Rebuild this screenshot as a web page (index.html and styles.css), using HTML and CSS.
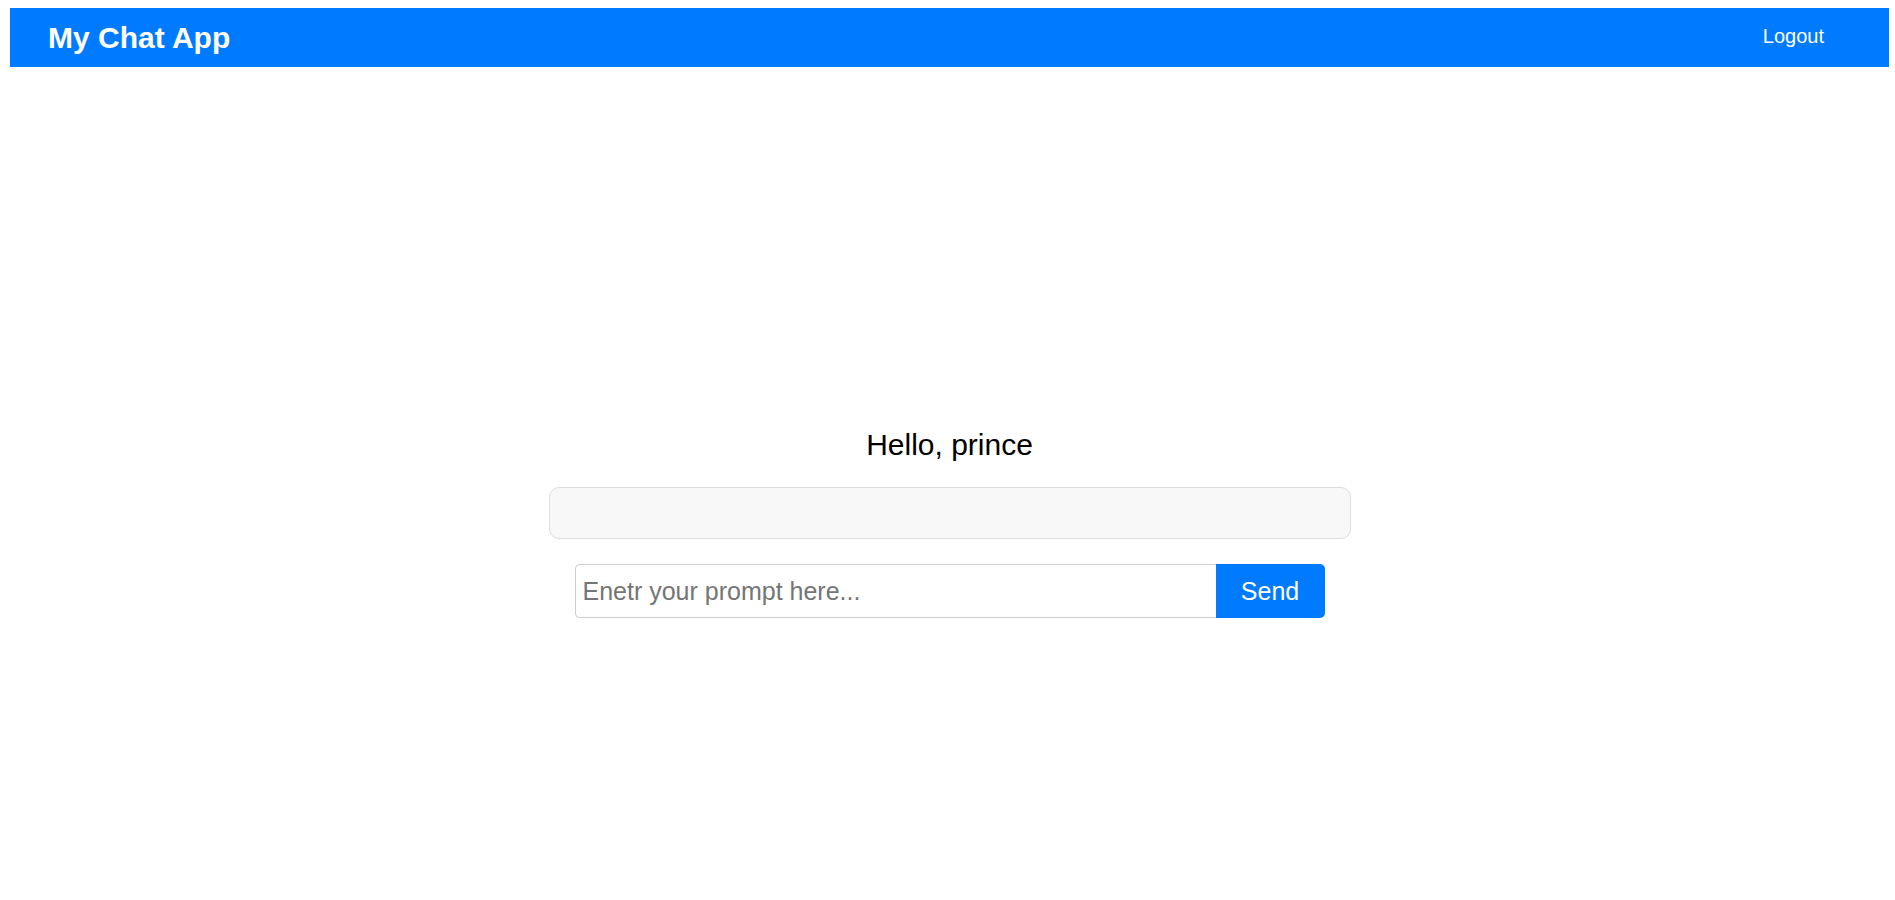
FILE: index.html
```html
<!DOCTYPE html>
<html lang="en">
<head>
<meta charset="utf-8">
<title>My Chat App</title>
<link rel="stylesheet" href="styles.css">
</head>
<body>
<header class="navbar">
  <div class="brand">My Chat App</div>
  <button class="logout" type="button">Logout</button>
</header>
<main class="chat">
  <h2 class="greeting">Hello, prince</h2>
  <div class="output"></div>
  <form class="prompt-row">
    <input class="prompt" type="text" placeholder="Enetr your prompt here...">
    <button class="send" type="button">Send</button>
  </form>
</main>
</body>
</html>
```
FILE: styles.css
```css
html, body {
  background: #ffffff;
}
body {
  margin: 8px 6px 8px 10px;
  font-family: "Liberation Sans", Arial, sans-serif;
  color: #000;
}
.navbar {
  height: 59px;
  background: #007bff;
  display: flex;
  align-items: center;
  justify-content: space-between;
  padding: 0 52px 0 38px;
  box-sizing: border-box;
}
.brand {
  color: #fff;
  font-weight: bold;
  font-size: 30px;
}
.logout {
  background: transparent;
  border: none;
  color: #fff;
  font-family: "Liberation Sans", Arial, sans-serif;
  font-size: 20px;
  padding: 0 13px 2px;
  cursor: pointer;
}
.chat {
  display: flex;
  flex-direction: column;
  align-items: center;
  padding-top: 361px;
}
.greeting {
  margin: 0;
  font-weight: normal;
  font-size: 30px;
  line-height: 33.5px;
}
.output {
  margin-top: 25px;
  width: 802px;
  height: 52px;
  box-sizing: border-box;
  background: #f8f8f8;
  border: 1px solid #dddddd;
  border-radius: 10px;
}
.prompt-row {
  margin: 25px 0 0;
  display: flex;
  width: 750px;
  height: 54px;
}
.prompt {
  flex: 1;
  min-width: 0;
  box-sizing: border-box;
  height: 100%;
  border: 1px solid #cccccc;
  border-right: none;
  border-radius: 5px 0 0 5px;
  padding: 2px 6px 0 7px;
  font-family: "Liberation Sans", Arial, sans-serif;
  font-size: 25px;
  color: #000;
  outline: none;
}
.prompt::placeholder {
  color: #757575;
}
.send {
  width: 109px;
  height: 100%;
  border: none;
  border-radius: 0 5px 5px 0;
  background: #007bff;
  color: #fff;
  font-family: "Liberation Sans", Arial, sans-serif;
  font-size: 25px;
  padding-top: 2px;
  cursor: pointer;
}
```
